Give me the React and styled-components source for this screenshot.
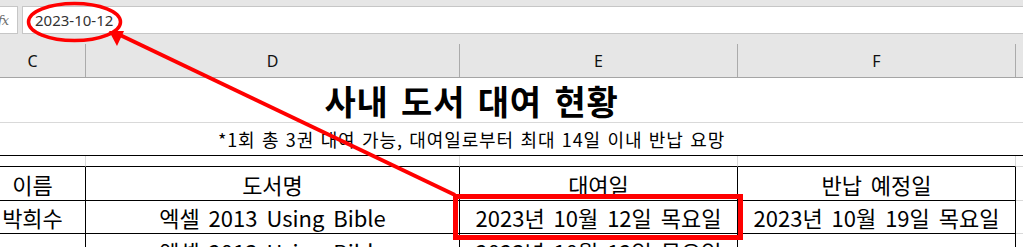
import React from "react";
import styled, { createGlobalStyle } from "styled-components";

const GlobalStyle = createGlobalStyle`
  html, body { margin: 0; padding: 0; background: #fff; overflow: hidden; }
  #root { width: 1023px; height: 247px; position: relative; overflow: hidden; }
`;

const COLS = "53px 106px 374px 278px 278px 200px";
const LIGHT = "#d9d9d9";
const BLACK = "#000";

const Page = styled.div`
  position: relative;
  width: 1023px;
  height: 247px;
  overflow: hidden;
  background: #fff;
`;

const FormulaBar = styled.div`
  display: flex;
  align-items: flex-start;
  gap: 4px;
  height: 34px;
  padding-top: 6px;
  box-sizing: border-box;
  background: #e6e6e6;
`;

const FxBox = styled.div`
  width: 18px;
  height: 28px;
  box-sizing: border-box;
  background: #fff;
  border: 1px solid #c6c6c6;
  border-left: none;
  display: flex;
  align-items: center;
  justify-content: flex-end;
  overflow: hidden;
  padding-right: 9px;
`;

const Fx = styled.span`
  font-family: "DejaVu Serif", serif;
  font-style: italic;
  font-size: 13px;
  color: #6f6f6f;
  letter-spacing: -1px;
`;

const Input = styled.div`
  flex: 1;
  height: 28px;
  box-sizing: border-box;
  background: #fff;
  border: 1px solid #c6c6c6;
  border-right: none;
  display: flex;
  align-items: center;
  padding-left: 12px;
  font-family: "Noto Sans", sans-serif;
  font-size: 15px;
  color: #333;
`;

const Grid = styled.div`
  display: grid;
  grid-template-columns: ${COLS};
  margin-left: -73px;
  width: 1289px;
`;

const HeaderRow = styled(Grid)`
  background: #e6e6e6;
  padding-top: 10px;
  border-bottom: 1px solid #a5a5a5;
`;

const ColHead = styled.div`
  height: 33px;
  box-sizing: border-box;
  border-right: 1px solid #ababab;
  display: flex;
  align-items: center;
  justify-content: center;
  font-family: "Noto Sans", sans-serif;
  font-size: 16px;
  color: #111;
`;

const Cell = styled.div`
  height: ${(p) => p.$h}px;
  box-sizing: content-box;
  border-bottom: 1px solid ${(p) => p.$bottom || LIGHT};
  border-right: ${(p) => (p.$right ? `1px solid ${p.$right}` : "none")};
  grid-column: ${(p) => p.$span || "auto"};
  display: flex;
  align-items: center;
  justify-content: center;
  overflow: hidden;
  white-space: nowrap;
  font-family: "Noto Sans CJK KR", "Noto Sans", sans-serif;
  font-size: 22px;
  word-spacing: 4px;
  color: #000;
`;

const Title = styled.span`
  font-weight: 700;
  font-size: 34px;
  letter-spacing: 0.8px;
  word-spacing: 4px;
`;

const Sub = styled.span`
  font-size: 18px;
  letter-spacing: 0.9px;
  word-spacing: 1.5px;
`;

const Annotation = styled.svg`
  position: absolute;
  left: 0;
  top: 0;
  pointer-events: none;
`;

const rows = [
  { h: 10, bottom: BLACK, right: LIGHT, cells: ["", "", "", "", "", ""] },
  {
    h: 33,
    bottom: BLACK,
    right: BLACK,
    cells: ["", "이름", "도서명", "대여일", "반납 예정일", ""],
  },
  {
    h: 32,
    bottom: BLACK,
    right: BLACK,
    cells: [
      "",
      "박희수",
      "엑셀 2013 Using Bible",
      "2023년 10월 12일 목요일",
      "2023년 10월 19일 목요일",
      "",
    ],
  },
  {
    h: 33,
    bottom: BLACK,
    right: BLACK,
    cells: ["", "", "엑셀 2013 Using Bible", "2023년 10월 12일 목요일", "", ""],
  },
];

export default function App() {
  const letters = ["B", "C", "D", "E", "F", "G"];
  return (
    <Page>
      <GlobalStyle />
      <FormulaBar>
        <FxBox>
          <Fx>fx</Fx>
        </FxBox>
        <Input>2023-10-12</Input>
      </FormulaBar>
      <HeaderRow>
        {letters.map((l) => (
          <ColHead key={l}>{l}</ColHead>
        ))}
      </HeaderRow>
      <Grid>
        <Cell $h={44} $span="1 / 6">
          <Title>사내 도서 대여 현황</Title>
        </Cell>
        <Cell $h={44} />
        <Cell $h={32} $span="1 / 6" $bottom={BLACK}>
          <Sub>*1회 총 3권 대여 가능, 대여일로부터 최대 14일 이내 반납 요망</Sub>
        </Cell>
        <Cell $h={32} $bottom={BLACK} />
        {rows.map((r, ri) =>
          r.cells.map((c, ci) => {
            const inTable = ci >= 1 && ci <= 4;
            const right = ci === 0 ? LIGHT : ci <= 4 ? r.right : LIGHT;
            const bottom = inTable ? r.bottom : LIGHT;
            return (
              <Cell
                key={`${ri}-${ci}`}
                $h={r.h}
                $right={ci === 5 ? null : right}
                $bottom={bottom}
              >
                {c}
              </Cell>
            );
          })
        )}
      </Grid>
      <Annotation width="1023" height="247" viewBox="0 0 1023 247">
        <ellipse cx="74.5" cy="22" rx="46" ry="18.5" fill="none" stroke="#ff0000" strokeWidth="3.5" />
        <line x1="455" y1="195" x2="120" y2="35" stroke="#ff0000" strokeWidth="4" />
        <polygon points="109,31 124,31 117,46" fill="#ff0000" />
        <rect x="455.5" y="196.5" width="285" height="41" fill="none" stroke="#ff0000" strokeWidth="5" />
      </Annotation>
    </Page>
  );
}
